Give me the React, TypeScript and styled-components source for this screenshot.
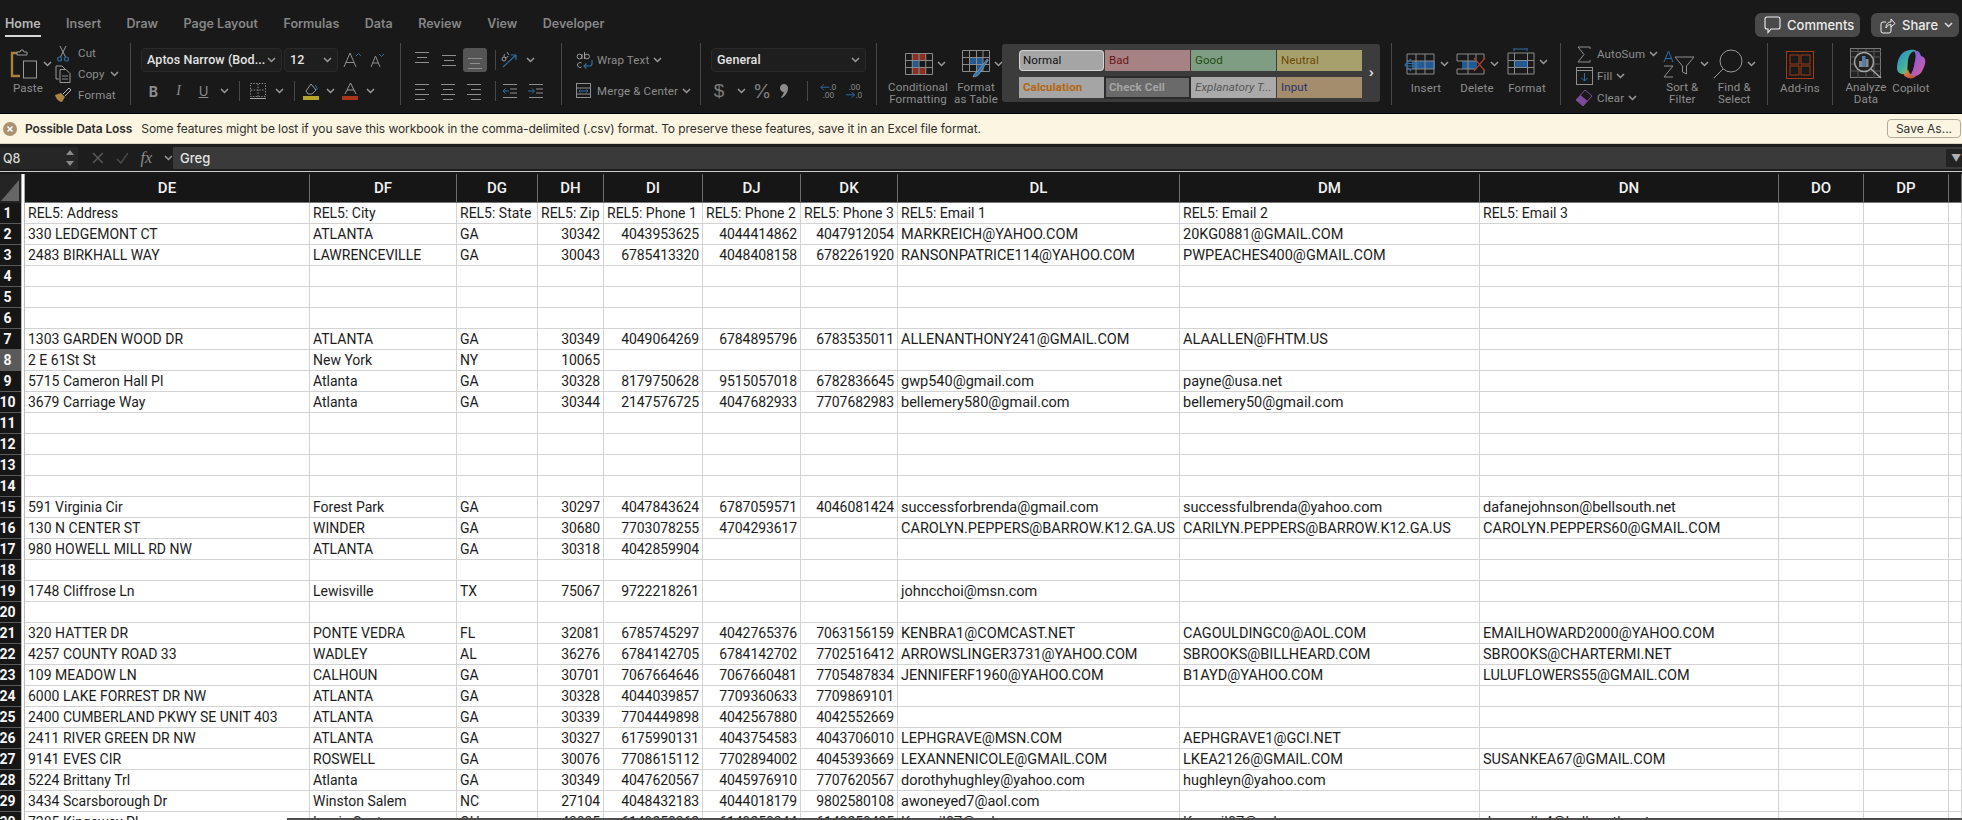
import React from 'react';
import styled, { createGlobalStyle } from 'styled-components';

const GlobalStyle = createGlobalStyle`
  html, body { margin: 0; padding: 0; background: #191919; overflow: hidden; }
  #root { width: 1962px; height: 820px; }
  * { box-sizing: border-box; }
`;

const UI = `Inter, "Noto Sans", "Liberation Sans", sans-serif`;
const SHEET = `Roboto, "Liberation Sans", sans-serif`;

const Page = styled.div`
  width: 1962px; height: 820px; overflow: hidden; position: relative;
  display: flex; flex-direction: column; background: #191919; font-family: ${UI};
`;
const TopStrip = styled.div`height: 4px; flex: none; overflow: hidden;`;
const TabBar = styled.div`
  height: 39px; flex: none; display: flex; align-items: flex-start; padding-left: 5px; padding-right: 3px;
`;
const Tabs = styled.nav`display: flex; gap: 25.5px; padding-top: 11px;`;
const Tab = styled.span<{ $active?: boolean }>`
  font-size: 12.5px; line-height: 17px; font-weight: 600; height: 22px; position: relative;
  color: ${p => (p.$active ? '#b9b9b9' : '#868686')};
  border-bottom: ${p => (p.$active ? '2px solid #d8d8d8' : '2px solid transparent')};
  padding-bottom: 3px;
`;
const TopActions = styled.div`margin-left: auto; display: flex; gap: 11px; padding-top: 9px;`;
const PillButton = styled.button<{ $w: number }>`
  width: ${p => p.$w}px; height: 24px; border: 0; border-radius: 6px; background: #4a4a4a; color: #ececec;
  font: 500 13px/24px ${UI}; display: flex; align-items: center; gap: 6px; padding: 0 0 0 9px;
`;

const Ribbon = styled.div`flex: none; display: flex; align-items: flex-start; border-bottom: 1px solid #000; height: 71px;`;
const Group = styled.section<{ $w: number; $pl?: number; $plain?: boolean }>`
  width: ${p => p.$w}px; height: 62px; flex: none; padding-left: ${p => p.$pl ?? 0}px; padding-top: 5px;
  border-right: ${p => (p.$plain ? '0' : '1px solid #474747')};
  display: flex; flex-direction: column;
`;
const ColGroup = styled(Group)`flex-direction: row; padding-top: 0;`;
const ToolRow = styled.div<{ $top?: number }>`
  display: flex; align-items: center; height: 24px; margin-top: ${p => p.$top ?? 0}px;
`;
const Slot = styled.span<{ $w: number; $on?: boolean }>`
  width: ${p => p.$w}px; height: 24px; flex: none; display: flex; align-items: center; justify-content: center;
  border-radius: 3px; background: ${p => (p.$on ? '#555' : 'transparent')};
`;
const ThinRule = styled.span`width: 1px; height: 20px; flex: none; background: #474747;`;
const Select = styled.div<{ $w: number }>`
  width: ${p => p.$w}px; height: 24px; flex: none; display: flex; align-items: center; justify-content: space-between;
  background: #1e1e1e; border: 1px solid #2a2a2a; border-radius: 4px; color: #e4e4e4; padding: 0 5px 0 5px;
  font: 500 12.5px/22px ${SHEET}; white-space: nowrap; letter-spacing: 0.1px;
`;
const SmallLabel = styled.span`font: 400 11.5px/14px ${SHEET}; color: #8e8e8e; white-space: nowrap; letter-spacing: 0.15px;`;
const ToolText = styled(SmallLabel)<{ $ml?: number }>`margin-left: ${p => p.$ml ?? 5}px;`;
const GlyphLabel = styled.span<{ $c?: string; $s?: number; $w?: number; $i?: boolean; $font?: string }>`
  color: ${p => p.$c ?? '#8c8c8c'}; font-size: ${p => p.$s ?? 13}px; font-weight: ${p => p.$w ?? 400};
  font-style: ${p => (p.$i ? 'italic' : 'normal')}; font-family: ${p => p.$font ?? UI};
`;
const StackTool = styled.div<{ $w: number }>`
  width: ${p => p.$w}px; flex: none; height: 62px; display: flex; flex-direction: column; align-items: center; position: relative;
`;
const IconZone = styled.div`height: 38px; display: flex; align-items: center; justify-content: center; gap: 4px; padding-top: 4px;`;
const StackLabel = styled(SmallLabel)`text-align: center; line-height: 12px; display: block; white-space: pre-line; margin-top: 1px;`;
const ClipboardList = styled.div`display: flex; flex-direction: column; padding-top: 0;`;
const ClipRow = styled.div`height: 22px; display: flex; align-items: center;`;
const ClipIcon = styled.span`width: 22px; display: flex; justify-content: center; flex: none;`;

const StylesPanel = styled.section`
  width: 378px; height: 58px; flex: none; margin-top: 1px; background: #3c3c3c; border-radius: 3px;
  display: flex; padding: 6px 0 0 17px; position: relative;
`;
const StyleGrid = styled.div`display: grid; grid-template-columns: repeat(4, 85px); grid-auto-rows: 21px; row-gap: 6px; column-gap: 1px;`;
const StyleCell = styled.div<{ $bg: string; $c: string; $b?: boolean; $i?: boolean; $outline?: string; $r?: number }>`
  background: ${p => p.$bg}; color: ${p => p.$c}; font: ${p => (p.$i ? 'italic ' : '')}${p => (p.$b ? 700 : 400)} 11.5px/20px ${SHEET};
  padding-left: 4px; white-space: nowrap; letter-spacing: 0.1px;
  outline: ${p => p.$outline ?? 'none'}; outline-offset: -1px; border-radius: ${p => p.$r ?? 0}px;
`;
const StyleArrow = styled.span`position: absolute; right: 6px; top: 23px; color: #ddd; font: 700 12px/12px ${UI};`;
const Spacer = styled.div<{ $w: number }>`width: ${p => p.$w}px; flex: none; height: 62px; border-right: 1px solid #474747;`;

const MessageBar = styled.div`
  height: 30px; flex: none; display: flex; align-items: center; background: #fcf5e1; color: #2f2f2f; border-bottom: 1px solid #d8d2c0; padding-left: 3px;
`;
const MessageIcon = styled.span`width: 22px; display: flex; flex: none;`;
const MessageTitle = styled.strong`font: 600 12px/16px ${UI}; color: #2c2c2c; letter-spacing: -0.1px;`;
const MessageText = styled.span`font: 400 12px/16px ${UI}; margin-left: 9px; letter-spacing: -0.08px;`;
const SaveAs = styled.button`
  margin-left: auto; margin-right: 1px; width: 74px; height: 19px; border: 1px solid #b1ab9d; border-radius: 4px; background: #fcf5e1;
  color: #333; font: 400 12px/16px ${UI}; padding: 0;
`;
const FormulaBar = styled.div`
  height: 28px; flex: none; display: flex; align-items: stretch; background: #1d1d1d; padding-top: 3px; padding-bottom: 2px;
  border-bottom: 1px solid #c9c9c9;
`;
const NameBox = styled.div`
  width: 78px; flex: none; background: #262626; color: #d8d8d8; font: 500 12.5px/23px ${UI}; padding-left: 3px; display: flex; justify-content: space-between; padding-right: 4px; align-items: center;
`;
const FxArea = styled.div`width: 95px; flex: none; display: flex; align-items: center; padding-left: 14px; gap: 12px; color: #555;`;
const FormulaInput = styled.div`flex: 1; background: #3a3a3a; color: #e6e6e6; font: 500 13px/22px ${UI}; padding-left: 7px; display: flex; justify-content: space-between;`;
const FormulaDrop = styled.span`width: 16px; background: #232323; margin: 2px 0; color: #b0b0b0; font-size: 10px; line-height: 18px; padding-left: 5px;`;

const COLS = '21px 4px 285px 147px 81px 66px 99px 98px 97px 282px 300px 299px 85px 85px 1fr';
const SheetArea = styled.div`flex: 1; overflow: hidden; background: #fff; margin-top: 2px;`;
const HeaderRow = styled.div`display: grid; grid-template-columns: ${COLS}; height: 29px; background: #161616;`;
const Corner = styled.div`background: #242424; position: relative; overflow: hidden;`;
const FreezeHead = styled.div`background: #fff; border-left: 1px solid #a8a8a8; border-right: 1px solid #a8a8a8;`;
const ColHead = styled.div`
  background: #161616; color: #f2f2f2; font: 500 15px/28px ${SHEET}; text-align: center; border-right: 1px solid #6c6c6c; border-bottom: 1px solid #777;
`;
const Row = styled.div`display: grid; grid-template-columns: ${COLS}; grid-template-rows: 21px; height: 21px;`;
const RowNum = styled.div<{ $sel?: boolean }>`
  background: ${p => (p.$sel ? '#5a5a5a' : '#161616')}; color: #f5f5f5; font: 700 14px/21px ${SHEET}; height: 21px;
  border-bottom: 1px solid #5a5a5a; display: flex; justify-content: center; padding-right: 6px; white-space: nowrap;
`;
const Freeze = styled.div`background: #fff; border-left: 1px solid #bdbdbd; border-right: 1px solid #bdbdbd;`;
const Cell = styled.div<{ $right?: boolean; $email?: boolean }>`
  background: #fff; color: #1c1c1c; font: 400 ${p => (p.$email ? 14.5 : 14)}px/21px ${SHEET}; padding: 0 3px; white-space: nowrap; height: 21px;
  border-right: 1px solid #d3d3d3; border-bottom: 1px solid #d3d3d3; text-align: ${p => (p.$right ? 'right' : 'left')};
  overflow: visible; letter-spacing: ${p => (p.$right ? '-0.1px' : '0')};
`;
const PaneEdge = styled.div`position: absolute; left: 287px; right: 0; bottom: 0; height: 2px; background: #4e4e4e;`;

const BLUE = '#2f6ea5';
const Chev = ({ c = '#9a9a9a' }: { c?: string }) => (
  <svg width="9" height="6" viewBox="0 0 9 6" fill="none"><path d="M1 1l3.5 3.5L8 1" stroke={c} strokeWidth="1.5" /></svg>
);
const Lines = ({ kind }: { kind: string }) => {
  const rows: Record<string, number[][]> = {
    top: [[0, 14, 1], [2, 12, 6], [0, 14, 11]],
    mid: [[0, 14, 4], [2, 12, 9], [0, 14, 14]],
    bot: [[0, 14, 7], [2, 12, 12], [0, 14, 17]],
    left: [[0, 14, 2], [0, 10, 7], [0, 14, 12], [0, 10, 17]],
    center: [[0, 14, 2], [2, 12, 7], [0, 14, 12], [2, 12, 17]],
    right: [[0, 14, 2], [4, 14, 7], [0, 14, 12], [4, 14, 17]],
  };
  return (
    <svg width="14" height="18" viewBox="0 0 14 18" fill="none">
      {rows[kind].map((r, i) => <path key={i} d={`M${r[0]} ${r[2] + .5}H${r[1]}`} stroke="#8f8f8f" />)}
    </svg>
  );
};
const Indent = ({ flip }: { flip?: boolean }) => (
  <svg width="15" height="16" viewBox="0 0 15 16" fill="none">
    <path d="M1 1.5h14M1 14.5h14M8 6h7M8 10h7" stroke="#8f8f8f" />
    {flip ? <path d="M0 8h6M4 5.5L6.5 8 4 10.5" stroke={BLUE} /> : <path d="M7 8H1M3.5 5.5L1 8l2.5 2.5" stroke={BLUE} />}
  </svg>
);
const PasteIcon = () => (
  <svg width="29" height="30" viewBox="0 0 29 30" fill="none">
    <path d="M14 4H2v23h8" stroke="#a97f3a" strokeWidth="2.4" />
    <path d="M7 6V3h3l1-2h2l1 2h3v3z" stroke="#9a9a9a" fill="#191919" />
    <rect x="13.5" y="12" width="13" height="17" stroke="#9a9a9a" fill="#191919" />
  </svg>
);
const Scissors = () => (
  <svg width="12" height="17" viewBox="0 0 12 17" fill="none">
    <path d="M3 1l5.5 11M9 1L3.5 12" stroke="#9a9a9a" />
    <circle cx="2.6" cy="14" r="2" stroke={BLUE} strokeWidth="1.2" /><circle cx="9.4" cy="14" r="2" stroke={BLUE} strokeWidth="1.2" />
  </svg>
);
const CopyIcon = () => (
  <svg width="16" height="18" viewBox="0 0 16 18" fill="none">
    <path d="M4 14H1V1h6l3 3" stroke="#9a9a9a" /><path d="M5 4.5h6l4 4v9H5z" stroke="#9a9a9a" /><path d="M7 11h6M7 14h6" stroke="#8a8a8a" />
  </svg>
);
const BrushIcon = () => (
  <svg width="18" height="16" viewBox="0 0 18 16" fill="none">
    <path d="M1 8l6-2 4 4-3 5c-3 0-6-3-7-7z" fill="#a98443" /><path d="M9 7l6-6 2 2-6 6" stroke="#bbb" />
  </svg>
);
const BigA = ({ up }: { up?: boolean }) => (
  <svg width={up ? 20 : 15} height="16" viewBox={up ? '0 0 20 16' : '0 0 15 16'} fill="none">
    <path d={up ? 'M1 15L7 1l6 14M3 10.5h8' : 'M1 15L5.5 4 10 15M2.5 11h6'} stroke="#8f8f8f" />
    {up ? <path d="M13 4l2.5-2.5L18 4" stroke={BLUE} /> : <path d="M9 2l2.5 2.5L14 2" stroke={BLUE} />}
  </svg>
);
const BorderIcon = () => (
  <svg width="16" height="16" viewBox="0 0 16 16" fill="none">
    <rect x=".5" y=".5" width="15" height="13" stroke="#8f8f8f" strokeDasharray="1.4 1.4" />
    <path d="M8 1v13M1 7h14" stroke="#8f8f8f" strokeDasharray="1.4 1.4" /><path d="M0 15.5h16" stroke="#aaa" />
  </svg>
);
const FillIcon = () => (
  <svg width="17" height="18" viewBox="0 0 17 18" fill="none">
    <path d="M3 9l5-7 5 6-4 4H5z" stroke="#9a9a9a" /><path d="M12 3c1.5 1 2 3 2 5" stroke={BLUE} />
    <rect x="0" y="14" width="16" height="4" fill="#b4a626" />
  </svg>
);
const ColorA = () => (
  <svg width="17" height="18" viewBox="0 0 17 18" fill="none">
    <path d="M3 12L8.5 1 14 12M5 8h7" stroke="#9a9a9a" /><rect x="0" y="14" width="16" height="4" fill="#a9361a" />
  </svg>
);
const Orient = () => (
  <svg width="18" height="18" viewBox="0 0 18 18" fill="none">
    <path d="M3 16L16 4M16 4h-5M16 4v5" stroke={BLUE} strokeWidth="1.2" />
    <g stroke="#9a9a9a"><circle cx="4" cy="8" r="2" /><path d="M7 1l2 3M5 3a2 2 0 103 2" /></g>
  </svg>
);
const WrapIcon = () => (
  <svg width="17" height="18" viewBox="0 0 17 18" fill="none">
    <path d="M16 9v3.5c0 1.5-1 2.5-2.5 2.5H8M10.5 12.5L8 15l2.5 2.5" stroke={BLUE} strokeWidth="1.2" />
    <g stroke="#9a9a9a"><circle cx="3.5" cy="5.5" r="2.4" /><path d="M6 3v5M8.5 1v7" /><circle cx="11" cy="5.5" r="2.4" /><path d="M5.5 12a2.5 2.5 0 100 4" /></g>
  </svg>
);
const MergeIcon = () => (
  <svg width="16" height="16" viewBox="0 0 16 16" fill="none">
    <rect x=".5" y=".5" width="14" height="14" stroke="#8f8f8f" /><path d="M.5 5h14M.5 11h14" stroke="#8f8f8f" />
    <path d="M3 8h9M4.5 6.5L3 8l1.5 1.5M10.5 6.5L12 8l-1.5 1.5" stroke={BLUE} />
  </svg>
);
const CommaIcon = () => (
  <svg width="8" height="14" viewBox="0 0 8 14"><path d="M4 0c2.300 0 4 1.700 4 4 0 4-2.500 8-6.500 10L1 13c1.500-1.300 2.500-3 2.700-5C1.500 8 0 6.300 0 4s1.700-4 4-4z" fill="#8c8c8c" /></svg>
);
const DecIcon = ({ more }: { more?: boolean }) => (
  <svg width="19" height="18" viewBox="0 0 19 18" fill="none">
    <path d={more ? 'M1 13h9M7 10l3 3-3 3' : 'M10 5H1M4 2L1 5l3 3'} stroke={BLUE} />
    <text x={more ? 4 : 10} y={8} fontSize="8" fill="#8f8f8f" fontFamily="Inter">{more ? '.00' : '.0'}</text>
    <text x={more ? 11 : 3} y="16" fontSize="8" fill="#8f8f8f" fontFamily="Inter">{more ? '.0' : '.00'}</text>
  </svg>
);
const TableIcon = ({ w = 28, h = 22, cols = 4, rows = 3, fills = [] }: { w?: number; h?: number; cols?: number; rows?: number; fills?: [number, number, number, number, string][] }) => {
  const lines: string[] = [];
  for (let i = 0; i <= cols; i++) lines.push(`M${.5 + (i * (w - 1)) / cols} .5V${h - .5}`);
  for (let j = 0; j <= rows; j++) lines.push(`M.5 ${.5 + (j * (h - 1)) / rows}H${w - .5}`);
  return (
    <svg width={w} height={h} viewBox={`0 0 ${w} ${h}`} fill="none">
      {fills.map((f, i) => <rect key={i} x={f[0]} y={f[1]} width={f[2]} height={f[3]} fill={f[4]} />)}
      <path d={lines.join('')} stroke="#8a8a8a" />
    </svg>
  );
};
const FormatTable = () => (
  <svg width="28" height="28" viewBox="0 0 28 28" fill="none">
    <rect x="7" y="8" width="7" height="7" fill="#225a96" /><rect x="14" y="8" width="7" height="14" fill="#225a96" />
    <path d="M.5.5h27v21H.5zM7.5.5v21M14.5.5v21M21 .5v21M.5 7.5h27M.5 14.5h27" stroke="#8a8a8a" />
    <path d="M11 27c1-4 3-5 5-6l9-12 1.5 1-8 12c-1 3-4 5-7.500 5z" fill="#3478b0" stroke="#aaa" strokeWidth=".5" />
  </svg>
);
const InsertIcon = () => (
  <svg width="32" height="22" viewBox="0 0 32 22" fill="none">
    <rect x="8" y="8" width="23" height="8" fill="#225a96" />
    <path d="M3 1h27v20H3zM3 8h27M3 16h27M12 1v20M21 1v20" stroke="#8a8a8a" />
    <path d="M15 10.500H2M15 13H2M7 6l-6 6 6 6" stroke={BLUE} strokeWidth="1.2" />
  </svg>
);
const DeleteIcon = () => (
  <svg width="30" height="22" viewBox="0 0 30 22" fill="none">
    <rect x="6" y="8" width="15" height="8" fill="#225a96" />
    <path d="M1 1h27M1 8h20M1 16h18M1 21h27M1 1v7M1 16v5M12 1v20M28 1v5M28 17v4M20 1v7" stroke="#8a8a8a" />
    <path d="M18 5l11 13M29 5L18 18" stroke="#a5432a" strokeWidth="1.2" />
  </svg>
);
const CellFormatIcon = () => (
  <svg width="28" height="28" viewBox="0 0 28 28" fill="none">
    <path d="M7 1h13M7 0v3M20 0v3" stroke={BLUE} />
    <rect x="7" y="13" width="14" height="7" fill="#225a96" />
    <path d="M1 5h26v21H1zM1 12.500h26M1 19.500h26M7.500 5v21M20.500 5v21" stroke="#8a8a8a" />
  </svg>
);
const Sigma = () => <svg width="14" height="17" viewBox="0 0 14 17" fill="none"><path d="M13 3V1H1l6 7.500L1 16h12v-2" stroke="#8f8f8f" /></svg>;
const FillDown = () => (
  <svg width="17" height="18" viewBox="0 0 17 18" fill="none"><rect x=".5" y=".5" width="16" height="17" stroke="#8f8f8f" /><path d="M.5 3.500h16" stroke="#8f8f8f" /><path d="M8.500 6v8M5.500 11l3 3 3-3" stroke={BLUE} /></svg>
);
const Eraser = () => (
  <svg width="18" height="18" viewBox="0 0 18 18" fill="none"><path d="M10 1l7 6-9 10-7-6z" fill="none" stroke="#7b4b9a" /><path d="M5.500 6l7 6-4.500 5-7-6z" fill="#7b4b9a" /></svg>
);
const SortIcon = () => (
  <svg width="33" height="28" viewBox="0 0 33 28" fill="none">
    <path d="M1 12L5.500 1 10 12M3 8.500h5" stroke={BLUE} />
    <path d="M1 16h9L1 27h9" stroke="#8f8f8f" />
    <path d="M12 7h19l-7.500 9v8l-4-2v-6z" stroke="#8f8f8f" />
  </svg>
);
const FindIcon = () => (
  <svg width="30" height="30" viewBox="0 0 30 30" fill="none"><circle cx="18" cy="12" r="11" stroke="#9a9a9a" /><path d="M10 20L1 29" stroke="#9a9a9a" /></svg>
);
const AddIns = () => (
  <svg width="28" height="28" viewBox="0 0 28 28" fill="none"><rect x=".5" y=".5" width="27" height="27" stroke="#a23b17" /><rect x="4" y="4" width="9" height="9" stroke="#a23b17" /><rect x="15" y="4" width="9" height="9" stroke="#a23b17" /><rect x="4" y="15" width="9" height="9" stroke="#a23b17" /><rect x="15" y="15" width="9" height="9" stroke="#a23b17" /></svg>
);
const Analyze = () => (
  <svg width="32" height="31" viewBox="0 0 32 31" fill="none">
    <rect x=".5" y=".5" width="30" height="29" stroke="#777" fill="#222" /><path d="M1 3.500h30M1 9h30M1 16h30M1 23h30M8 1v29M16 1v29M24 1v29" stroke="#555" />
    <circle cx="14" cy="14" r="9.500" fill="#222" stroke="#a5a5a5" strokeWidth="1.500" />
    <rect x="9" y="13" width="3" height="6" fill="#8a8a8a" /><rect x="12" y="8" width="3.500" height="11" fill="#4a7fb0" /><rect x="15.500" y="11" width="3" height="8" fill="#8a8a8a" />
    <path d="M21 21l10 9" stroke="#a5a5a5" strokeWidth="1.500" />
  </svg>
);
const Copilot = () => (
  <svg width="31" height="31" viewBox="0 0 31 31" fill="none">
    <defs>
      <linearGradient id="cpA" x1="0" y1="0" x2="1" y2="1"><stop offset="0" stopColor="#2a86c9" /><stop offset=".5" stopColor="#3fb1a0" /><stop offset="1" stopColor="#d4b23c" /></linearGradient>
      <linearGradient id="cpB" x1="0" y1="0" x2="1" y2="1"><stop offset="0" stopColor="#4a70d8" /><stop offset=".5" stopColor="#a45bc8" /><stop offset="1" stopColor="#d8608a" /></linearGradient>
      <linearGradient id="cpC" x1="0" y1="0" x2="1" y2="1"><stop offset="0" stopColor="#d89048" /><stop offset="1" stopColor="#c0463a" /></linearGradient>
    </defs>
    <path d="M11 25c-6 1-10-1-10-6 0-7 3-15 9-17 4-1 8-2 10 0-5 0-7 4-8 9z" fill="url(#cpA)" />
    <path d="M18 2c4-1 6 1 7 5 4 1 5 4 4 8-2 7-5 12-10 12-3 0-6 2-8 0 4 0 6-5 7-10 1-6 3-11 0-15z" fill="url(#cpB)" />
    <path d="M12 20c1 4 3 7 8 7-2 3-7 3-10 1-2-1-2-2-2-3 2-1 3-3 4-5z" fill="url(#cpC)" />
  </svg>
);
const CommentIcon = () => <svg width="17" height="18" viewBox="0 0 17 18" fill="none"><path d="M3 1h11a2 2 0 012 2v8a2 2 0 01-2 2H7l-3 3.500V13H3a2 2 0 01-2-2V3a2 2 0 012-2z" stroke="#eee" strokeWidth="1.100" /></svg>;
const ShareIcon = () => <svg width="16" height="17" viewBox="0 0 16 17" fill="none"><path d="M11 9v5a2 2 0 01-2 2H3a2 2 0 01-2-2V7a2 2 0 012-2h3" stroke="#eee" /><path d="M6 11c0-4 2-6 5-6V2l4 4.500L11 10V7.500c-2 0-4 1-5 3.500z" stroke="#eee" /></svg>;
const WarnIcon = () => <svg width="14" height="14" viewBox="0 0 14 14"><circle cx="7" cy="7" r="7" fill="#ab9171" /><path d="M4.500 4.500l5 5M9.500 4.500l-5 5" stroke="#fff" strokeWidth="1.500" /></svg>;
const Remnants = () => (
  <svg width="1962" height="4" viewBox="0 0 1962 4" fill="none">
    <path d="M307 0v1h13v-1M345 0l5 3M350 0l-5 3M367 0l1 2M215 0v2" stroke="#666" />
    <path d="M335 0h10v2h-10z" fill="#245c94" />
    <path d="M1650 0c0 2 1 3 3 3h270c2 0 3-1 3-3" stroke="#333" />
  </svg>
);

const DATA: Record<number, string[]> = {
  1: ['REL5: Address', 'REL5: City', 'REL5: State', 'REL5: Zip', 'REL5: Phone 1', 'REL5: Phone 2', 'REL5: Phone 3', 'REL5: Email 1', 'REL5: Email 2', 'REL5: Email 3'],
  2: ['330 LEDGEMONT CT', 'ATLANTA', 'GA', '30342', '4043953625', '4044414862', '4047912054', 'MARKREICH@YAHOO.COM', '20KG0881@GMAIL.COM'],
  3: ['2483 BIRKHALL WAY', 'LAWRENCEVILLE', 'GA', '30043', '6785413320', '4048408158', '6782261920', 'RANSONPATRICE114@YAHOO.COM', 'PWPEACHES400@GMAIL.COM'],
  7: ['1303 GARDEN WOOD DR', 'ATLANTA', 'GA', '30349', '4049064269', '6784895796', '6783535011', 'ALLENANTHONY241@GMAIL.COM', 'ALAALLEN@FHTM.US'],
  8: ['2 E 61St St', 'New York', 'NY', '10065'],
  9: ['5715 Cameron Hall Pl', 'Atlanta', 'GA', '30328', '8179750628', '9515057018', '6782836645', 'gwp540@gmail.com', 'payne@usa.net'],
  10: ['3679 Carriage Way', 'Atlanta', 'GA', '30344', '2147576725', '4047682933', '7707682983', 'bellemery580@gmail.com', 'bellemery50@gmail.com'],
  15: ['591 Virginia Cir', 'Forest Park', 'GA', '30297', '4047843624', '6787059571', '4046081424', 'successforbrenda@gmail.com', 'successfulbrenda@yahoo.com', 'dafanejohnson@bellsouth.net'],
  16: ['130 N CENTER ST', 'WINDER', 'GA', '30680', '7703078255', '4704293617', '', 'CAROLYN.PEPPERS@BARROW.K12.GA.US', 'CARILYN.PEPPERS@BARROW.K12.GA.US', 'CAROLYN.PEPPERS60@GMAIL.COM'],
  17: ['980 HOWELL MILL RD NW', 'ATLANTA', 'GA', '30318', '4042859904'],
  19: ['1748 Cliffrose Ln', 'Lewisville', 'TX', '75067', '9722218261', '', '', 'johncchoi@msn.com'],
  21: ['320 HATTER DR', 'PONTE VEDRA', 'FL', '32081', '6785745297', '4042765376', '7063156159', 'KENBRA1@COMCAST.NET', 'CAGOULDINGC0@AOL.COM', 'EMAILHOWARD2000@YAHOO.COM'],
  22: ['4257 COUNTY ROAD 33', 'WADLEY', 'AL', '36276', '6784142705', '6784142702', '7702516412', 'ARROWSLINGER3731@YAHOO.COM', 'SBROOKS@BILLHEARD.COM', 'SBROOKS@CHARTERMI.NET'],
  23: ['109 MEADOW LN', 'CALHOUN', 'GA', '30701', '7067664646', '7067660481', '7705487834', 'JENNIFERF1960@YAHOO.COM', 'B1AYD@YAHOO.COM', 'LULUFLOWERS55@GMAIL.COM'],
  24: ['6000 LAKE FORREST DR NW', 'ATLANTA', 'GA', '30328', '4044039857', '7709360633', '7709869101'],
  25: ['2400 CUMBERLAND PKWY SE UNIT 403', 'ATLANTA', 'GA', '30339', '7704449898', '4042567880', '4042552669'],
  26: ['2411 RIVER GREEN DR NW', 'ATLANTA', 'GA', '30327', '6175990131', '4043754583', '4043706010', 'LEPHGRAVE@MSN.COM', 'AEPHGRAVE1@GCI.NET'],
  27: ['9141 EVES CIR', 'ROSWELL', 'GA', '30076', '7708615112', '7702894002', '4045393669', 'LEXANNENICOLE@GMAIL.COM', 'LKEA2126@GMAIL.COM', 'SUSANKEA67@GMAIL.COM'],
  28: ['5224 Brittany Trl', 'Atlanta', 'GA', '30349', '4047620567', '4045976910', '7707620567', 'dorothyhughley@yahoo.com', 'hughleyn@yahoo.com'],
  29: ['3434 Scarsborough Dr', 'Winston Salem', 'NC', '27104', '4048432183', '4044018179', '9802580108', 'awoneyed7@aol.com'],
  30: ['7285 Kingsway Pl', 'Lewis Center', 'OH', '43035', '6149250362', '6149250344', '6149250435', 'Kroneil07@aol.com', 'Kroneil07@aol.com', 'dconnelly4@bellsouth.net'],
};
const HEADS = ['DE', 'DF', 'DG', 'DH', 'DI', 'DJ', 'DK', 'DL', 'DM', 'DN', 'DO', 'DP', ''];
const TABS = ['Home', 'Insert', 'Draw', 'Page Layout', 'Formulas', 'Data', 'Review', 'View', 'Developer'];
const isNumCol = (r: number, c: number) => r !== 1 && c >= 3 && c <= 6;

export default function App() {
  return (
    <Page>
      <GlobalStyle />
      <TopStrip><Remnants /></TopStrip>
      <TabBar>
        <Tabs>{TABS.map((t, i) => <Tab key={t} $active={i === 0}>{t}</Tab>)}</Tabs>
        <TopActions>
          <PillButton $w={105}><CommentIcon />Comments</PillButton>
          <PillButton $w={88}><ShareIcon />Share<Chev c="#ddd" /></PillButton>
        </TopActions>
      </TabBar>

      <Ribbon>
        <ColGroup $w={131} $pl={10}>
          <StackTool $w={42}>
            <IconZone style={{ alignSelf: 'flex-start' }}><PasteIcon /><Chev /></IconZone>
            <StackLabel style={{ alignSelf: 'flex-start', marginLeft: 3 }}>Paste</StackLabel>
          </StackTool>
          <ClipboardList>
            <ClipRow><ClipIcon><Scissors /></ClipIcon><ToolText $ml={4}>Cut</ToolText></ClipRow>
            <ClipRow><ClipIcon><CopyIcon /></ClipIcon><ToolText $ml={4}>Copy</ToolText><Slot $w={20}><Chev /></Slot></ClipRow>
            <ClipRow><ClipIcon><BrushIcon /></ClipIcon><ToolText $ml={4}>Format</ToolText></ClipRow>
          </ClipboardList>
        </ColGroup>

        <Group $w={270} $pl={10}>
          <ToolRow>
            <Select $w={141}>Aptos Narrow (Bod...<Chev /></Select>
            <Select $w={54} style={{ marginLeft: 2 }}>12<Chev /></Select>
            <Slot $w={25} style={{ marginLeft: 2 }}><BigA up /></Slot>
            <Slot $w={25}><BigA /></Slot>
          </ToolRow>
          <ToolRow $top={7}>
            <Slot $w={25}><GlyphLabel $s={14} $w={700}>B</GlyphLabel></Slot>
            <Slot $w={25}><GlyphLabel $s={14} $i $font='"Liberation Serif", serif'>I</GlyphLabel></Slot>
            <Slot $w={25}><GlyphLabel $s={13} style={{ textDecoration: 'underline' }}>U</GlyphLabel></Slot>
            <Slot $w={16}><Chev /></Slot>
            <Slot $w={15}><ThinRule /></Slot>
            <Slot $w={22}><BorderIcon /></Slot>
            <Slot $w={20}><Chev /></Slot>
            <Slot $w={10}><ThinRule /></Slot>
            <Slot $w={24}><FillIcon /></Slot>
            <Slot $w={14}><Chev /></Slot>
            <Slot $w={26}><ColorA /></Slot>
            <Slot $w={14}><Chev /></Slot>
          </ToolRow>
        </Group>

        <Group $w={161} $pl={8}>
          <ToolRow>
            <Slot $w={26}><Lines kind="top" /></Slot>
            <Slot $w={28}><Lines kind="mid" /></Slot>
            <Slot $w={24} $on><Lines kind="bot" /></Slot>
            <Slot $w={8} />
            <ThinRule />
            <Slot $w={26}><Orient /></Slot>
            <Slot $w={16}><Chev /></Slot>
          </ToolRow>
          <ToolRow $top={7}>
            <Slot $w={26}><Lines kind="left" /></Slot>
            <Slot $w={26}><Lines kind="center" /></Slot>
            <Slot $w={26}><Lines kind="right" /></Slot>
            <Slot $w={8} />
            <ThinRule />
            <Slot $w={26}><Indent /></Slot>
            <Slot $w={26}><Indent flip /></Slot>
          </ToolRow>
        </Group>

        <Group $w={139} $pl={13}>
          <ToolRow><Slot $w={18}><WrapIcon /></Slot><ToolText $ml={4}>Wrap Text</ToolText><Slot $w={16}><Chev /></Slot></ToolRow>
          <ToolRow $top={7}><Slot $w={18}><MergeIcon /></Slot><ToolText $ml={4}>Merge &amp; Center</ToolText><Slot $w={16}><Chev /></Slot></ToolRow>
        </Group>

        <Group $w={176} $pl={10}>
          <ToolRow><Select $w={155}>General<Chev /></Select></ToolRow>
          <ToolRow $top={7}>
            <Slot $w={16}><GlyphLabel $s={19} $c="#7c7c7c" $font='"Liberation Sans", sans-serif'>$</GlyphLabel></Slot>
            <Slot $w={28}><Chev /></Slot>
            <Slot $w={14}><GlyphLabel $s={19} $c="#7c7c7c">%</GlyphLabel></Slot>
            <Slot $w={30}><CommaIcon /></Slot>
            <Slot $w={8} />
            <ThinRule />
            <Slot $w={18} style={{ marginLeft: 12 }}><DecIcon /></Slot>
            <Slot $w={18} style={{ marginLeft: 7 }}><DecIcon more /></Slot>
          </ToolRow>
        </Group>

        <ColGroup $w={125} $plain>
          <StackTool $w={74}>
            <IconZone style={{ paddingLeft: 22 }}>
              <TableIcon fills={[[7, 1, 14, 7, '#8b2f22'], [7, 8, 7, 7, '#225a96'], [7, 15, 14, 7, '#8b2f22']]} /><Chev />
            </IconZone>
            <StackLabel style={{ marginLeft: 8 }}>{'Conditional\nFormatting'}</StackLabel>
          </StackTool>
          <StackTool $w={50}>
            <IconZone style={{ paddingLeft: 12 }}><FormatTable /><Chev /></IconZone>
            <StackLabel>{'Format\nas Table'}</StackLabel>
          </StackTool>
        </ColGroup>

        <StylesPanel>
          <StyleGrid>
            <StyleCell $bg="#a5a5a5" $c="#111" $outline="1px solid #d5d5d5" $r={4}>Normal</StyleCell>
            <StyleCell $bg="#a68285" $c="#6d1414">Bad</StyleCell>
            <StyleCell $bg="#7f9d83" $c="#1f4d12">Good</StyleCell>
            <StyleCell $bg="#a8a06c" $c="#6b4a06">Neutral</StyleCell>
            <StyleCell $bg="#a5a5a5" $c="#b5650f" $b>Calculation</StyleCell>
            <StyleCell $bg="#6a6a6a" $c="#a5a5a5" $b $outline="2px solid #2b2b2b">Check Cell</StyleCell>
            <StyleCell $bg="#aaaaaa" $c="#555" $i>Explanatory T...</StyleCell>
            <StyleCell $bg="#a48d6d" $c="#27306a">Input</StyleCell>
          </StyleGrid>
          <StyleArrow>›</StyleArrow>
        </StylesPanel>
        <Spacer $w={12} />

        <ColGroup $w={169} $pl={8}>
          <StackTool $w={52}><IconZone><InsertIcon /><Chev /></IconZone><StackLabel>Insert</StackLabel></StackTool>
          <StackTool $w={50}><IconZone><DeleteIcon /><Chev /></IconZone><StackLabel>Delete</StackLabel></StackTool>
          <StackTool $w={50}><IconZone style={{ paddingTop: 0 }}><CellFormatIcon /><Chev /></IconZone><StackLabel>Format</StackLabel></StackTool>
        </ColGroup>

        <ColGroup $w={207} $pl={12}>
          <ClipboardList>
            <ClipRow><ClipIcon><Sigma /></ClipIcon><ToolText $ml={2}>AutoSum</ToolText><Slot $w={16}><Chev /></Slot></ClipRow>
            <ClipRow><ClipIcon><FillDown /></ClipIcon><ToolText $ml={2}>Fill</ToolText><Slot $w={16}><Chev /></Slot></ClipRow>
            <ClipRow><ClipIcon><Eraser /></ClipIcon><ToolText $ml={2}>Clear</ToolText><Slot $w={16}><Chev /></Slot></ClipRow>
          </ClipboardList>
          <StackTool $w={46} style={{ marginLeft: 2 }}><IconZone style={{ paddingTop: 5 }}><SortIcon /><Chev /></IconZone><StackLabel style={{ marginLeft: -8 }}>{'Sort &\nFilter'}</StackLabel></StackTool>
          <StackTool $w={50}><IconZone style={{ paddingTop: 5 }}><FindIcon /><Chev /></IconZone><StackLabel>{'Find &\nSelect'}</StackLabel></StackTool>
        </ColGroup>

        <ColGroup $w={65} $pl={0}>
          <StackTool $w={64}><IconZone style={{ paddingTop: 5 }}><AddIns /></IconZone><StackLabel>Add-ins</StackLabel></StackTool>
        </ColGroup>

        <ColGroup $w={128} $pl={10} $plain>
          <StackTool $w={46}><IconZone style={{ paddingTop: 4 }}><Analyze /></IconZone><StackLabel>{'Analyze\nData'}</StackLabel></StackTool>
          <StackTool $w={44}><IconZone style={{ paddingTop: 5 }}><Copilot /></IconZone><StackLabel>Copilot</StackLabel></StackTool>
        </ColGroup>
      </Ribbon>

      <MessageBar>
        <MessageIcon><WarnIcon /></MessageIcon>
        <MessageTitle>Possible Data Loss</MessageTitle>
        <MessageText>Some features might be lost if you save this workbook in the comma-delimited (.csv) format. To preserve these features, save it in an Excel file format.</MessageText>
        <SaveAs>Save As...</SaveAs>
      </MessageBar>

      <FormulaBar>
        <NameBox>Q8<svg width="8" height="20" viewBox="0 0 8 20"><path d="M4 2l4 5H0zM4 18l4-5H0z" fill="#8a8a8a" /></svg></NameBox>
        <FxArea>
          <svg width="12" height="12" viewBox="0 0 12 12" fill="none"><path d="M1 1l10 10M11 1L1 11" stroke="#5a5a5a" strokeWidth="1.500" /></svg>
          <svg width="13" height="12" viewBox="0 0 13 12" fill="none"><path d="M1 7l4 4 7-10" stroke="#4c4c4c" strokeWidth="1.500" /></svg>
          <GlyphLabel $s={16} $i $c="#8f8f8f" $font='"Liberation Serif", serif'>fx</GlyphLabel>
          <Chev />
        </FxArea>
        <FormulaInput>Greg<FormulaDrop>▼</FormulaDrop></FormulaInput>
      </FormulaBar>

      <SheetArea>
        <HeaderRow>
          <Corner>
            <svg width="21" height="29" viewBox="0 0 21 29"><path d="M19 6v21H1z" fill="#666" /></svg>
          </Corner>
          <FreezeHead />
          {HEADS.map((h, i) => <ColHead key={i}>{h}</ColHead>)}
        </HeaderRow>
        {Array.from({ length: 30 }, (_, idx) => idx + 1).map(r => (
          <Row key={r}>
            <RowNum $sel={r === 8}>{r}</RowNum>
            <Freeze />
            {HEADS.map((_, c) => (
              <Cell key={c} $right={isNumCol(r, c)} $email={c >= 7 && c <= 9 && r !== 1}>{DATA[r]?.[c] ?? ''}</Cell>
            ))}
          </Row>
        ))}
      </SheetArea>
      <PaneEdge />
    </Page>
  );
}
